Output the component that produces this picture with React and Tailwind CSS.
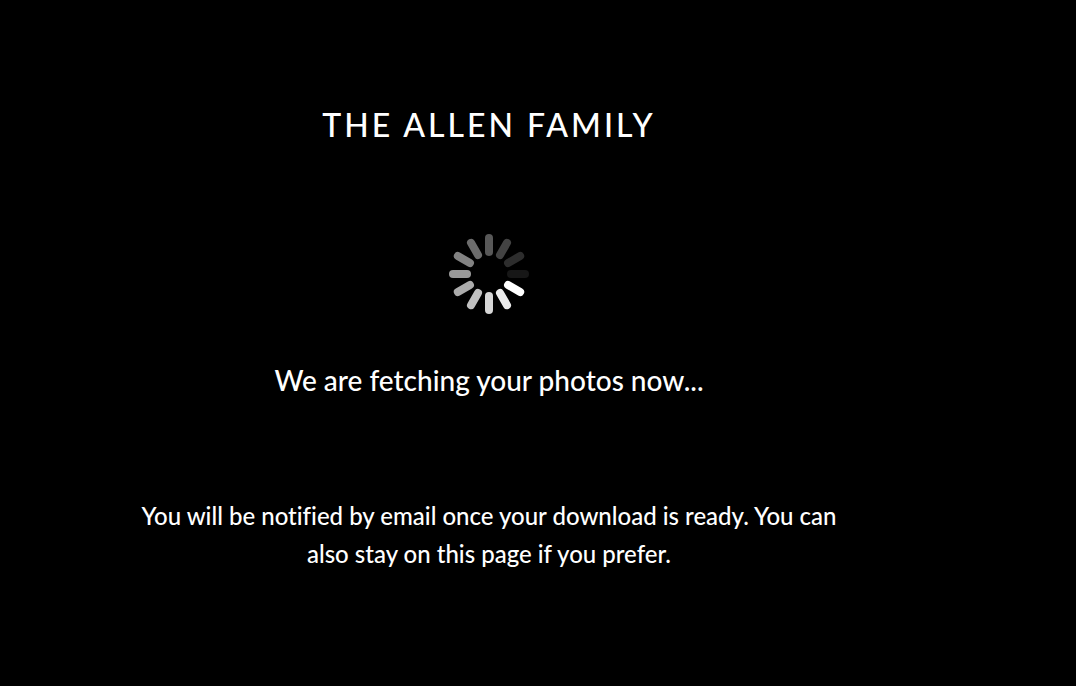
const spokes = [
  '#585858', '#434343', '#2d2d2d', '#171717', '#ffffff', '#ebebeb',
  '#d6d6d6', '#c0c0c0', '#ababab', '#999999', '#828282', '#6c6c6c',
];

function Spinner() {
  return (
    <svg viewBox="0 0 80 80" className="size-20" role="img" aria-label="Loading">
      {spokes.map((color, i) => (
        <rect key={i} x="36" y="0" width="8" height="22" rx="4" fill={color} transform={`rotate(${i * 30} 40 40)`} />
      ))}
    </svg>
  );
}

export default function App() {
  return (
    <div className="min-h-screen bg-black pr-[98px] font-['Lato',sans-serif] font-medium text-white">
      <main className="flex flex-col items-center px-6 pt-[105px] pb-12 text-center">
        <h1 className="text-[32px] leading-10 font-medium tracking-[3px]">THE ALLEN FAMILY</h1>
        <div className="mt-[89px]">
          <Spinner />
        </div>
        <p className="mt-[46px] text-[28px] leading-10">We are fetching your photos now...</p>
        <p className="mt-[97px] max-w-[720px] text-2xl leading-[38px] [font-variant-ligatures:none]">
          You will be notified by email once your download is ready. You can also stay on this page if you prefer.
        </p>
      </main>
    </div>
  );
}
